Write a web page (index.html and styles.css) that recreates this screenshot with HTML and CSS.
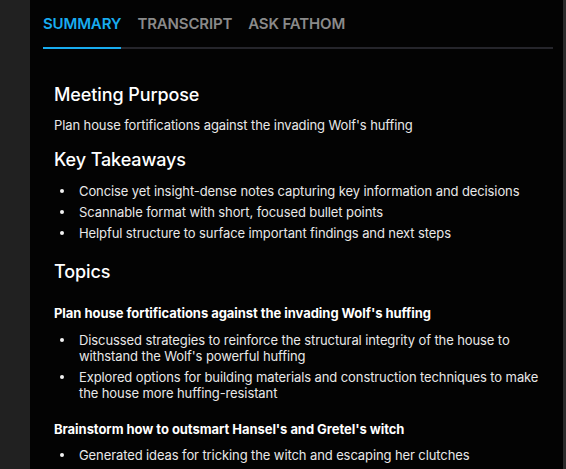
FILE: index.html
```html
<!DOCTYPE html>
<html lang="en">
<head>
    <meta charset="UTF-8">
    <meta name="viewport" content="width=device-width, initial-scale=1.0">
    <title>Fathom - Summary</title>
    <link rel="stylesheet" href="styles.css">
</head>
<body>
    <div class="sidebar"></div>

    <div class="panel">
        <div class="tabs">
            <div class="tab active">SUMMARY</div>
            <div class="tab">TRANSCRIPT</div>
            <div class="tab">ASK FATHOM</div>
        </div>

        <div class="summary">
            <h2 class="title">Meeting Purpose</h2>
            <p class="purpose">Plan house fortifications against the invading Wolf's huffing</p>

            <h2 class="title takeaways">Key Takeaways</h2>
            <ul class="points first">
                <li>Concise yet insight-dense notes capturing key information and decisions</li>
                <li>Scannable format with short, focused bullet points</li>
                <li>Helpful structure to surface important findings and next steps</li>
            </ul>

            <h2 class="title topics">Topics</h2>
            <h3 class="topic first">Plan house fortifications against the invading Wolf's huffing</h3>
            <ul class="points">
                <li>Discussed strategies to reinforce the structural integrity of the house to withstand the Wolf's powerful huffing</li>
                <li>Explored options for building materials and construction techniques to make the house more huffing-resistant</li>
            </ul>

            <h3 class="topic">Brainstorm how to outsmart Hansel's and Gretel's witch</h3>
            <ul class="points last">
                <li>Generated ideas for tricking the witch and escaping her clutches</li>
            </ul>
        </div>
    </div>

    <div class="scrollbar"></div>
</body>
</html>
```

FILE: styles.css
```css
html, body {
    height: 100%;
}
body {
    margin: 0;
    display: flex;
    font-family: Inter, "Noto Sans", sans-serif;
    background-color: #030303;
    color: #e8e8e8;
    overflow: hidden;
}
.sidebar {
    width: 30px;
    flex-shrink: 0;
    background-color: #212121;
}
.scrollbar {
    width: 3px;
    flex-shrink: 0;
    background-color: #2b2b2b;
}
.panel {
    flex: 1;
    min-width: 0;
}

/* Tabs */
.tabs {
    display: flex;
    gap: 16px;
    margin: 0 10px 0 13px;
    padding-top: 15px;
    border-bottom: 2px solid #25252b;
}
.tab {
    font-size: 15px;
    font-weight: 600;
    line-height: 18px;
    padding-bottom: 14px;
    color: #8a8a8a;
    letter-spacing: -0.15px;
}
.tab.active {
    color: #18acf0;
    border-bottom: 2px solid #18acf0;
    margin-bottom: -2px;
}

/* Summary content */
.summary {
    display: flex;
    flex-direction: column;
    padding: 35px 24px 0;
    font-size: 13px;
    line-height: 16px;
    letter-spacing: -0.1px;
}
.title {
    margin: 0;
    font-size: 18px;
    line-height: 22px;
    font-weight: 500;
    color: #fff;
    letter-spacing: -0.1px;
}
.purpose {
    margin: 11px 0 0;
}
.takeaways {
    margin-top: 16px;
}
.topics {
    margin-top: 20px;
}
.topic {
    margin: 20px 0 0;
    font-size: 13px;
    line-height: 16px;
    font-weight: 700;
    color: #fff;
    letter-spacing: -0.05px;
}
.topic.first {
    margin-top: 22px;
}
.points {
    margin: 11px 0 0;
    padding: 0;
    list-style: none;
}
.points.first {
    margin-top: 12px;
}
.points.last {
    margin-top: 10px;
}
.points li {
    display: grid;
    grid-template-columns: 25px 1fr;
}
.points li::before {
    content: "";
    width: 4px;
    height: 4px;
    margin: 6px 0 0 6px;
    border-radius: 50%;
    background-color: #f2f2f2;
}
.points li + li {
    margin-top: 5px;
}
```
